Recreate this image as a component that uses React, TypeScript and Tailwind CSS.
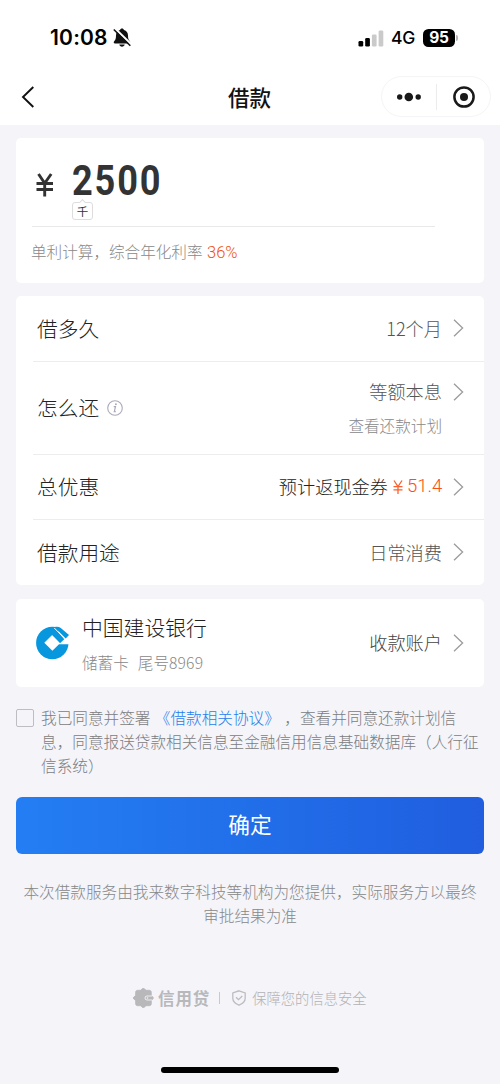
import type { ReactNode } from "react";

function Chevron({ className = "" }: { className?: string }) {
  return (
    <svg className={`h-[18px] w-[11px] shrink-0 ${className}`} viewBox="0 0 11 18" fill="none" stroke="#9c9c9c" strokeWidth="1.3">
      <path d="M1 .8 9.6 9 1 17.2" />
    </svg>
  );
}

function StatusBar() {
  return (
    <div className="flex h-[76px] items-center pl-[50px] pr-[42px] font-['Inter','Liberation_Sans',sans-serif]">
      <span className="w-[58px] whitespace-nowrap text-[21px] font-semibold leading-6 tracking-[0.2px]">10:08</span>
      <svg className="ml-[5px] h-[20px] w-[18px]" viewBox="0 0 18 20">
        <path d="M9 .5C8 .5 7.200 1.200 7 2.100 4.500 2.900 3 5 3 7.500c0 3.400-.7 4.500-1.800 5.700-.9 1-.5 2.300.8 2.300h14c1.300 0 1.700-1.300.8-2.300C15.700 12 15 10.900 15 7.500c0-2.500-1.500-4.600-4-5.400C10.800 1.200 10 .5 9 .5ZM6.300 16.500c.3 1.300 1.300 2.200 2.700 2.200s2.400-.9 2.700-2.200Z" fill="#111" />
        <path d="M1.900.5 18.500 16.500" stroke="#fff" strokeWidth="2.200" />
        <path d="M.8 1.500 17.300 17.700" stroke="#111" strokeWidth="1.600" />
      </svg>
      <svg className="ml-auto h-[17px] w-[26px]" viewBox="0 0 26 17">
        <rect x="0.500" y="11" width="4.700" height="5.500" rx="1.300" fill="#000" />
        <rect x="7.200" y="8" width="4.700" height="8.500" rx="1.300" fill="#000" />
        <rect x="13.900" y="4.500" width="4.700" height="12" rx="1.300" fill="#cacaca" />
        <rect x="20.600" y="0.500" width="4.700" height="16" rx="1.300" fill="#cacaca" />
      </svg>
      <span className="ml-[7px] w-[25px] text-[17.500px] font-medium leading-6 tracking-[-0.3px]">4G</span>
      <span className="ml-[7px] flex h-[18px] w-[32px] items-center justify-center rounded-[5.500px] bg-black text-[15.500px] font-bold tracking-[-0.2px] text-white">95</span>
      <span className="ml-[1px] h-[6px] w-[2px] rounded-r-full bg-[#b5b5b5]" />
    </div>
  );
}

function NavBar() {
  return (
    <div className="flex h-[49px] items-start justify-between pl-[21px] pr-[9px]">
      <svg className="mt-[10px] h-[22px] w-[14px]" viewBox="0 0 14 22" fill="none" stroke="#111" strokeWidth="1.900">
        <path d="M12.300 1 2 11l10.300 10" />
      </svg>
      <h1 className="ml-[83px] mt-[5px] text-[21.500px] font-medium leading-8 text-[#111]">借款</h1>
      <div className="flex h-[41px] w-[110px] items-center rounded-full border border-[#f5f5f5]">
        <svg className="ml-[15px] h-[10px] w-[24px]" viewBox="0 0 24 10" fill="#191919">
          <circle cx="2.700" cy="5" r="2.700" />
          <circle cx="11.800" cy="5" r="4.300" />
          <circle cx="21.200" cy="5" r="2.700" />
        </svg>
        <span className="ml-[15px] h-[26px] w-px bg-[#ececec]" />
        <svg className="ml-[16px] h-[22px] w-[22px]" viewBox="0 0 22 22">
          <circle cx="11" cy="11" r="9.600" fill="none" stroke="#191919" strokeWidth="2.500" />
          <circle cx="11" cy="11" r="4" fill="#191919" />
        </svg>
      </div>
    </div>
  );
}

function Row({ label, children, height, last = false }: { label: ReactNode; children: ReactNode; height: string; last?: boolean }) {
  return (
    <div className={`ml-[17px] flex items-center justify-between pl-[4px] pr-[20px] ${height} ${last ? "" : "border-b border-[#ededef]"}`}>
      <div className="flex items-center text-[20.700px] text-[#222]">{label}</div>
      {children}
    </div>
  );
}

function BankLogo() {
  return (
    <svg className="h-[34px] w-[34px] shrink-0" viewBox="0 0 34 34">
      <circle cx="16.300" cy="17" r="16.200" fill="#0797de" />
      <path d="M16.400 8.700 8.300 16.700l8.100 8.100L23 18.200h11V9L26.800 15.400 24 17Z" fill="#fff" />
      <path d="M21.500 0H34v18h-4.500l-5.200-1Z" fill="#fff" />
      <path d="M14 3.800 19 2.500 28.300 13.200 24.300 17.100 14 7Z" fill="#0797de" />
      <path d="M18.500 1.300C20.800.4 23 .8 24.800 2L33 9.100 29.700 12.600Z" fill="#0797de" />
      <path d="m18.300 2 11 11.300" stroke="#fff" strokeWidth="1" />
    </svg>
  );
}

export default function App() {
  return (
    <div className="flex h-[1084px] w-[500px] flex-col overflow-hidden bg-[#f4f4f9] font-['Noto_Sans_CJK_SC',sans-serif] font-light text-black">
      <header className="h-[125px] shrink-0 bg-white">
        <StatusBar />
        <NavBar />
      </header>

      <main className="flex flex-col px-4 pt-[13px]">
        <section className="h-[145px] rounded-[5px] bg-white pl-4">
          <div className="flex h-[89px] w-[403px] border-b border-[#e9e9e9]">
            <svg className="ml-[4px] mt-[35px] h-[24px] w-[18px]" viewBox="0 0 18 24" fill="none" stroke="#333" strokeWidth="2.900">
              <path d="m2.500 1 6.200 9.300L15.200 1M.5 10.500h16.500M.5 16.500h16.500M8.700 10v13.500" />
            </svg>
            <div className="ml-[18px] pt-[23px]">
              <div className="h-[40px] w-[90px] origin-left scale-x-[.86] whitespace-nowrap font-['Roboto',sans-serif] text-[42px] font-bold leading-[40px] tracking-[2.200px] text-[#333]">2500</div>
              <div className="relative mt-[1px] flex h-[18px] w-[21px] items-center justify-center rounded-[3px] border border-[#ddd] text-[11.500px] font-normal leading-[14px] text-[#333]">
                <span className="absolute -top-[3px] left-[7px] h-[5px] w-[5px] rotate-45 border-l border-t border-[#ddd] bg-white" />
                千
              </div>
            </div>
          </div>
          <p className="-ml-px mt-[12px] text-[15.600px] leading-6 text-[#888]">
            单利计算，综合年化利率 <span className="ml-px font-['Roboto',sans-serif] text-[16.500px] font-light text-[#f05010]">36%</span>
          </p>
        </section>

        <section className="mt-[13px] h-[289px] rounded-[5px] bg-white">
          <Row label="借多久" height="h-[66px]">
            <div className="flex items-center text-[18.200px] text-[#555]">
              12个月<Chevron className="ml-[11px]" />
            </div>
          </Row>
          <Row
            height="h-[93px]"
            label={
              <>
                怎么还
                <svg className="ml-[8px] h-[16px] w-[16px]" viewBox="0 0 16 16">
                  <circle cx="8" cy="8" r="7.300" fill="none" stroke="#aaaabc" strokeWidth="1.100" />
                  <path d="M6.700 6.700h1.800L7.300 11.700h1.500" fill="none" stroke="#aaaabc" strokeWidth="1.200" />
                  <circle cx="8.900" cy="4.300" r=".95" fill="#aaaabc" />
                </svg>
              </>
            }
          >
            <div className="flex flex-col pt-[1px]">
              <div className="flex h-[33px] items-center justify-end text-[18.200px] text-[#555]">
                等额本息<Chevron className="ml-[11px]" />
              </div>
              <div className="h-[33px] pr-[22px] text-right text-[15.600px] leading-[33px] text-[#888]">查看还款计划</div>
            </div>
          </Row>
          <Row label="总优惠" height="h-[65px]">
            <div className="flex items-center text-[18.200px] text-[#222]">
              预计返现金券
              <svg className="ml-[5px] h-[14px] w-[10px]" viewBox="0 0 10 14" fill="none" stroke="#fa6030" strokeWidth="1.300">
                <path d="m1 .5 4 6 4-6M.5 6.700h9M.5 9.900h9M5 6.500V14" />
              </svg>
              <span className="ml-[4px] w-[35px] whitespace-nowrap font-['Roboto',sans-serif] text-[18.500px] font-light text-[#fa5015]">51.4</span>
              <Chevron className="ml-[11px]" />
            </div>
          </Row>
          <Row label="借款用途" height="h-[65px]" last>
            <div className="flex items-center text-[18.200px] text-[#555]">
              日常消费<Chevron className="ml-[11px]" />
            </div>
          </Row>
        </section>

        <section className="mt-[14px] flex h-[88px] items-center rounded-[5px] bg-white pl-[20px] pr-[20px]">
          <BankLogo />
          <div className="ml-[12px]">
            <div className="text-[20.800px] leading-[32px] text-[#222]">中国建设银行</div>
            <div className="mt-[5px] text-[15.600px] leading-[28px] text-[#888]">
              储蓄卡<span className="ml-[9px]">尾号</span><span className="tracking-[0.200px]">8969</span>
            </div>
          </div>
          <div className="ml-auto flex items-center text-[18.200px] leading-[26px] text-[#444]">
            <span className="-mt-[2px]">收款账户</span>
            <Chevron className="ml-[11px]" />
          </div>
        </section>

        <label className="mt-[19px] flex items-start">
          <span className="mt-[3px] h-[18px] w-[18px] shrink-0 rounded-[2px] border border-[#bdbdc2]" />
          <span className="ml-[7px] whitespace-nowrap text-[15.630px] leading-6 text-[#7c7c80]">
            我已同意并签署 <span className="ml-px text-[#1f80ec]">《借款相关协议》</span> <span className="ml-px">，查看并同意还款计划信</span>
            <br />
            息，同意报送贷款相关信息至金融信用信息基础数据库（人行征
            <br />
            信系统）
          </span>
        </label>

        <button className="mt-[19px] h-[57px] rounded-[6px] bg-linear-to-r from-[#247ef3] to-[#205edf] pb-[2px] text-[21.700px] font-normal text-white">确定</button>

        <p className="mt-[26px] whitespace-nowrap text-center text-[15.630px] leading-6 text-[#888]">
          本次借款服务由我来数字科技等机构为您提供，实际服务方以最终
          <br />
          审批结果为准
        </p>
      </main>

      <footer className="mt-[58px] flex h-[24px] items-center pl-[133px] text-[#b2b2b5]">
        <svg className="h-[20px] w-[21px]" viewBox="0 0 21 20">
          <path d="M7.500 2.300 10.300 0l2.800 2.300h3.200c1.200 0 2 .8 2 2v3L20.500 10l-2.200 2.700v3c0 1.200-.8 2-2 2h-3.200L10.300 20l-2.800-2.300H4.600c-1.200 0-2-.8-2-2v-3L0 10l2.600-2.700v-3c0-1.200.8-2 2-2Z" fill="#b8b8bb" stroke="#b8b8bb" strokeWidth="0.800" strokeLinejoin="round" />
          <path d="M19 8h-5a2 2 0 0 0 0 4h5" fill="none" stroke="#f4f4f9" strokeWidth="0.900" />
          <circle cx="14.500" cy="10" r="0.800" fill="#f4f4f9" />
        </svg>
        <span className="ml-[4px] text-[16.500px] font-bold tracking-[0.900px] text-[#b8b8bb]">信用贷</span>
        <span className="ml-[9px] h-[12px] w-px bg-[#c9c9cd]" />
        <svg className="ml-[12px] h-[16px] w-[14px]" viewBox="0 0 14 16" fill="none" stroke="#bdbdc0" strokeWidth="1.300">
          <path d="M7 .8 13.200 3v5.300c0 3.300-2.600 5.400-6.200 6.900C3.400 13.700.8 11.600.8 8.300V3ZM4 7.200l2.500 2.500 3.800-3.700" />
        </svg>
        <span className="ml-[6px] text-[14.300px]">保障您的信息安全</span>
      </footer>

      <div className="mx-auto mt-[57px] h-[6px] w-[178px] shrink-0 rounded-full bg-black" />
    </div>
  );
}
